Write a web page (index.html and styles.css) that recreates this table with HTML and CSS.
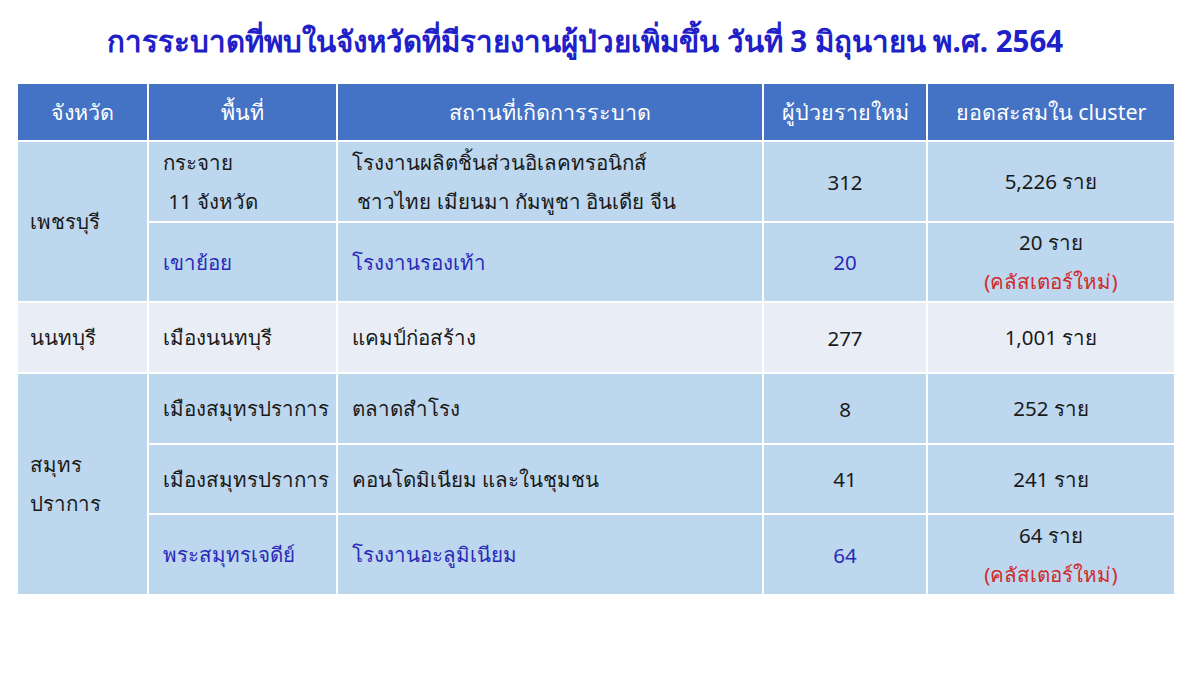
FILE: index.html
```html
<!DOCTYPE html>
<html lang="th">
<head>
<meta charset="utf-8">
<link rel="stylesheet" href="styles.css">
</head>
<body>
<div class="page">
  <h1 class="title">การระบาดที่พบในจังหวัดที่มีรายงานผู้ป่วยเพิ่มขึ้น วันที่ 3 มิถุนายน พ.ศ. 2564</h1>
  <table class="grid">
    <colgroup>
      <col class="c1"><col class="c2"><col class="c3"><col class="c4"><col class="c5">
    </colgroup>
    <thead>
      <tr class="head">
        <th>จังหวัด</th>
        <th>พื้นที่</th>
        <th>สถานที่เกิดการระบาด</th>
        <th>ผู้ป่วยรายใหม่</th>
        <th>ยอดสะสมใน cluster</th>
      </tr>
    </thead>
    <tbody>
      <tr class="r1">
        <td rowspan="2" class="prov">เพชรบุรี</td>
        <td class="two">กระจาย<br>&nbsp;11 จังหวัด</td>
        <td class="two">โรงงานผลิตชิ้นส่วนอิเลคทรอนิกส์<br>&nbsp;ชาวไทย เมียนมา กัมพูชา อินเดีย จีน</td>
        <td class="num">312</td>
        <td class="num">5,226 ราย</td>
      </tr>
      <tr class="r2">
        <td class="blue">เขาย้อย</td>
        <td class="blue">โรงงานรองเท้า</td>
        <td class="num blue">20</td>
        <td class="num two">20 ราย<br><span class="red">(คลัสเตอร์ใหม่)</span></td>
      </tr>
      <tr class="r3 pale">
        <td class="prov">นนทบุรี</td>
        <td>เมืองนนทบุรี</td>
        <td>แคมป์ก่อสร้าง</td>
        <td class="num">277</td>
        <td class="num">1,001 ราย</td>
      </tr>
      <tr class="r4">
        <td rowspan="3" class="prov two">สมุทร<br>ปราการ</td>
        <td>เมืองสมุทรปราการ</td>
        <td>ตลาดสำโรง</td>
        <td class="num">8</td>
        <td class="num">252 ราย</td>
      </tr>
      <tr class="r5">
        <td>เมืองสมุทรปราการ</td>
        <td>คอนโดมิเนียม และในชุมชน</td>
        <td class="num">41</td>
        <td class="num">241 ราย</td>
      </tr>
      <tr class="r6">
        <td class="blue">พระสมุทรเจดีย์</td>
        <td class="blue">โรงงานอะลูมิเนียม</td>
        <td class="num blue">64</td>
        <td class="num two">64 ราย<br><span class="red">(คลัสเตอร์ใหม่)</span></td>
      </tr>
    </tbody>
  </table>
</div>
</body>
</html>
```
FILE: styles.css
```css
html, body {
  margin: 0;
  padding: 0;
  background: #ffffff;
}
body {
  width: 1200px;
  height: 675px;
  overflow: hidden;
  font-family: Tahoma, "Noto Sans", "DejaVu Sans", sans-serif;
  color: #1a1a1a;
}
.page {
  padding: 21px 0 0 16px;
}
.title {
  margin: 0 0 21px 0;
  width: 1138px;
  text-align: center;
  font-size: 29.5px;
  line-height: 40px;
  font-weight: bold;
  color: #2020c8;
  white-space: nowrap;
}
.grid {
  width: 1158px;
  border-collapse: collapse;
  table-layout: fixed;
  font-size: 20.5px;
}
.c1 { width: 131px; }
.c2 { width: 189px; }
.c3 { width: 426px; }
.c4 { width: 164px; }
.c5 { width: 248px; }
.grid th, .grid td {
  border: 2px solid #ffffff;
  padding: 0 0 0 14px;
  vertical-align: middle;
  text-align: left;
}
.grid th {
  background: #4472c4;
  color: #ffffff;
  font-weight: normal;
  font-size: 21.5px;
  text-align: center;
  padding: 0;
  height: 56px;
}
.grid td {
  background: #bdd7ee;
}
.grid .pale td {
  background: #e9edf6;
}
.grid td.prov {
  padding-left: 12px;
}
.grid td.num {
  text-align: center;
  padding: 0;
}
.two {
  line-height: 39px;
}
.blue {
  color: #2a2ab8;
}
.red {
  color: #d12a2a;
}
.r1 td { height: 79px; }
.r2 td { height: 77px; }
.r3 td { height: 69px; }
.r4 td { height: 69px; }
.r5 td { height: 68px; }
.r6 td { height: 79px; }
```
